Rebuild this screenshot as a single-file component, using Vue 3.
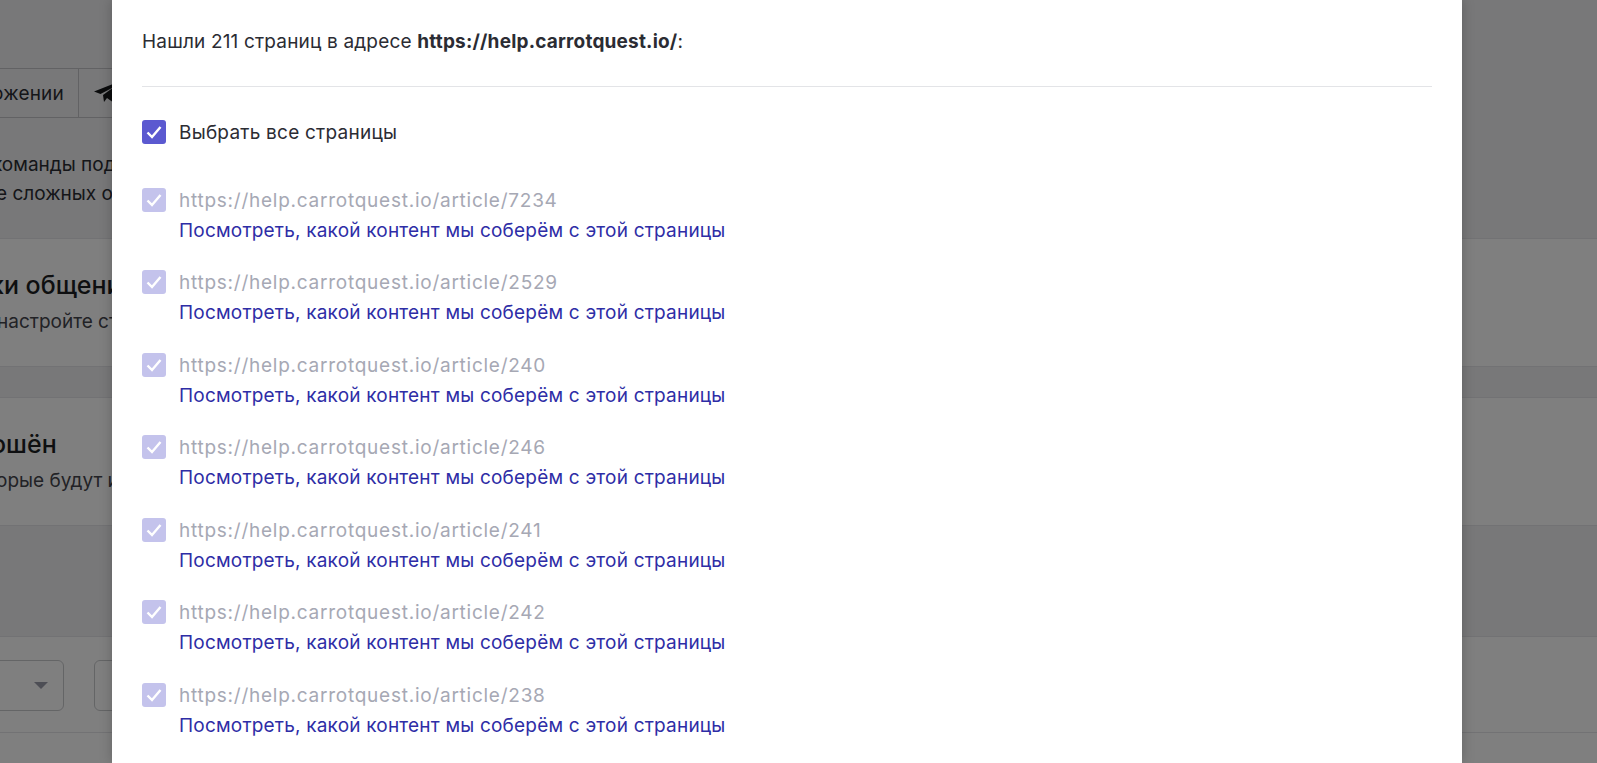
<script setup>
const articles = [7234, 2529, 240, 246, 241, 242, 238]
</script>

<template>
  <div class="page">
    <section class="band band-top">
      <div class="toolbar">
        <div class="tab tab-text">ожении</div>
        <div class="tab tab-icon">
          <svg class="plane" width="30" height="26" viewBox="0 0 30 26">
            <path d="M0 11.5 24 2 20 23 13 18 10 22 9 15 20 7 6.5 14Z" fill="#17181b" />
          </svg>
        </div>
      </div>
      <p class="copy copy-one">команды под</p>
      <p class="copy copy-two">е сложных о</p>
    </section>

    <section class="band band-card card-one">
      <h2 class="heading heading-one">ки общени</h2>
      <p class="copy copy-three">настройте ст</p>
    </section>

    <div class="gap"></div>

    <section class="band band-card card-two">
      <h2 class="heading heading-two">ошён</h2>
      <p class="copy copy-four">орые будут и</p>
    </section>

    <div class="gap gap-tall"></div>

    <section class="band band-form">
      <div class="fields">
        <div class="select"><span class="caret"></span></div>
        <div class="input"></div>
      </div>
    </section>
    <div class="band-foot"></div>

    <div class="backdrop"></div>

    <div class="modal">
      <p class="found">Нашли 211 страниц в адресе <b>https://help.carrotquest.io/</b>:</p>
      <hr class="rule" />
      <label class="check-row all">
        <span class="box">
          <svg width="24" height="24" viewBox="0 0 24 24"><path d="M5.5 12.5 10 17 18.5 7" /></svg>
        </span>
        <span class="all-label">Выбрать все страницы</span>
      </label>
      <ul class="list">
        <li v-for="id in articles" :key="id" class="item">
          <span class="box box-off">
            <svg width="24" height="24" viewBox="0 0 24 24"><path d="M5.5 12.5 10 17 18.5 7" /></svg>
          </span>
          <div class="item-text">
            <div class="url">https://help.carrotquest.io/article/{{ id }}</div>
            <a class="link">Посмотреть, какой контент мы соберём с этой страницы</a>
          </div>
        </li>
      </ul>
    </div>
  </div>
</template>

<style>
html, body { margin: 0; background: #fff; overflow: hidden; }
</style>

<style scoped>
.page {
  position: relative;
  width: 1597px;
  height: 763px;
  overflow: hidden;
  background: #f0f1f3;
  font-family: Inter, "Noto Sans", sans-serif;
  font-size: 19px;
  color: #2b2c33;
}
.band { box-sizing: border-box; white-space: nowrap; overflow: hidden; }
.band-top { height: 238px; padding-top: 68px; }
.toolbar {
  display: flex;
  height: 50px;
  box-sizing: border-box;
  border-top: 1px solid #c4c5c8;
  border-bottom: 1px solid #c4c5c8;
  width: 200px;
}
.tab { display: flex; align-items: center; }
.tab-text {
  box-sizing: border-box;
  width: 79px;
  justify-content: flex-end;
  padding-right: 14px;
  border-right: 1px solid #c4c5c8;
  letter-spacing: 0.2px;
}
.tab-icon { padding-left: 15px; }
.copy { margin: 0; line-height: 29px; color: #2b2c33; }
.copy-one { margin-top: 32px; margin-left: -8px; }
.copy-two { margin-left: -4px; }
.band-card {
  height: 129px;
  background: #fff;
  border-top: 1px solid #e4e5e8;
  border-bottom: 1px solid #e4e5e8;
}
.gap { height: 30px; }
.gap-tall { height: 110px; }
.heading { margin: 0; font-size: 25px; font-weight: 500; line-height: 32px; color: #1d1e22; }
.heading-one { margin: 30px 0 0 -10px; }
.heading-two { margin: 30px 0 0 -9px; }
.copy-three { margin: 6px 0 0 -3px; color: #44454c; }
.copy-four { margin: 6px 0 0 -4px; color: #44454c; }
.band-form {
  height: 97px;
  background: #fff;
  border-top: 1px solid #e4e5e8;
  border-bottom: 1px solid #e4e5e8;
  padding-top: 23px;
}
.fields { display: flex; gap: 30px; margin-left: -20px; }
.select, .input {
  box-sizing: border-box;
  height: 51px;
  border: 1px solid #c9cacd;
  border-radius: 6px;
}
.select { width: 84px; display: flex; align-items: center; justify-content: flex-end; padding-right: 15px; }
.caret {
  width: 0; height: 0;
  border-left: 7px solid transparent;
  border-right: 7px solid transparent;
  border-top: 7px solid #9a9caa;
}
.input { width: 200px; }
.band-foot { height: 30px; background: #fff; }
.backdrop { position: absolute; inset: 0; background: rgba(0, 0, 0, 0.5); }
.modal {
  position: absolute;
  top: 0;
  bottom: 0;
  left: 112px;
  width: 1350px;
  box-sizing: border-box;
  padding: 27px 30px 0;
  background: #fff;
  box-shadow: 0 0 12px rgba(0, 0, 0, 0.22);
  overflow: hidden;
  letter-spacing: 0.17px;
}
.found { margin: 0; line-height: 30px; }
.found b { font-weight: 700; letter-spacing: 0.2px; }
.rule { margin: 29px 0 0; border: 0; height: 1px; background: #e3e4e7; }
.check-row { display: flex; align-items: center; gap: 13px; }
.all { margin-top: 33px; height: 24px; }
.all-label { letter-spacing: 0.23px; }
.box {
  flex: none;
  display: block;
  width: 24px;
  height: 24px;
  border-radius: 3px;
  background: #5b59d0;
}
.box svg { display: block; fill: none; stroke: #fff; stroke-width: 2.4; }
.box-off { background: #c4c3ec; }
.list { list-style: none; margin: 43.75px 0 0; padding: 0; }
.item { display: flex; gap: 13px; height: 82.5px; }
.item-text { line-height: 30px; margin-top: -2px; }
.url { color: #a6a8b4; letter-spacing: 0.75px; }
.link { color: #2e2da6; display: block; letter-spacing: 0.2px; }
</style>
